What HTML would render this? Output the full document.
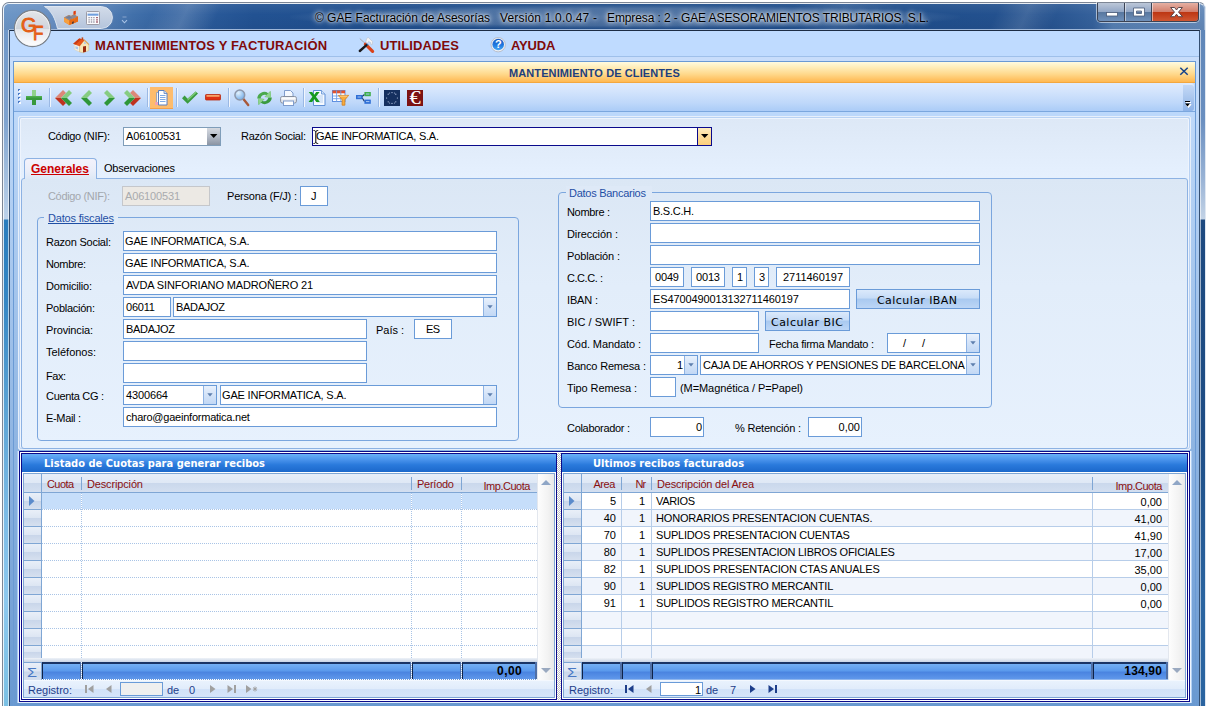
<!DOCTYPE html>
<html lang="es"><head><meta charset="utf-8"><title>GAE Facturación de Asesorías</title>
<style>
html,body{margin:0;padding:0;background:#fff;}
body{width:1206px;height:706px;overflow:hidden;position:relative;font-family:"Liberation Sans",sans-serif;}
#w{position:absolute;left:0;top:0;width:1206px;height:706px;overflow:hidden;}
#w div{position:absolute;box-sizing:border-box;}
#w svg{position:absolute;overflow:visible;}
.t{position:absolute;white-space:pre;color:#000;}
.n{font:11px "Liberation Sans",sans-serif;line-height:13px;}
.b11{font:bold 11px "Liberation Sans",sans-serif;line-height:13px;}
.b12{font:bold 12px "Liberation Sans",sans-serif;line-height:14px;}
.b13{font:bold 13px "Liberation Sans",sans-serif;line-height:15px;}
.t12{font:12px "Liberation Sans",sans-serif;line-height:14px;}
.tb{font:bold 11px "DejaVu Sans Condensed","DejaVu Sans",sans-serif;line-height:13px;}
.v{font:11px "DejaVu Sans",sans-serif;line-height:13px;}
.f{background:#fff;border:1px solid #6a9bd8;}
.btn{border:1px solid #6a9bd8;background:linear-gradient(#dbe9fb,#c6dcf7 45%,#a9c9f0 50%,#bcd6f6);}
</style></head>
<body><div id="w">
<div style="left:2px;top:2px;width:1204px;height:710px;border-radius:7px 7px 0 0;border:1px solid #7d8695;border-right-color:#dfe7f2;background:#6f9acb;"></div>
<div style="left:3px;top:3px;width:1202px;height:28px;border-radius:6px 6px 0 0;background:linear-gradient(90deg,#6d96c6 0,#6990c2 45px,#5580b6 100px,#4170aa 130px,#2f5f9e 175px,#225292 250px,#1d4b88 600px,#1f4e8c 900px,#25528f 1040px,#35619b 1090px,#567fb2 1110px,#6489b8 1200px);"></div>
<div style="left:3px;top:3px;width:1202px;height:60px;border-top:1px solid rgba(255,255,255,.9);border-left:1px solid rgba(255,255,255,.9);border-right:1px solid rgba(255,255,255,.35);border-radius:6px 6px 0 0;"></div>
<div style="left:3px;top:4px;width:1202px;height:27px;background:linear-gradient(rgba(255,255,255,.07),rgba(255,255,255,0) 40%,rgba(0,0,30,.05));"></div>
<div style="left:130px;top:4px;width:120px;height:26px;background:linear-gradient(115deg,rgba(255,255,255,0) 20%,rgba(255,255,255,.16) 45%,rgba(255,255,255,0) 70%);"></div>
<div style="left:760px;top:4px;width:160px;height:26px;background:linear-gradient(115deg,rgba(255,255,255,0) 20%,rgba(255,255,255,.10) 50%,rgba(255,255,255,0) 80%);"></div>
<div style="left:980px;top:4px;width:90px;height:26px;background:linear-gradient(115deg,rgba(255,255,255,0) 20%,rgba(255,255,255,.12) 50%,rgba(255,255,255,0) 80%);"></div>
<div style="left:3px;top:30px;width:6px;height:680px;background:linear-gradient(#6f97c8 0,#7fa3cf 90px,#a0bcdc 140px,#bdd2ea 189px,#2a7dbd 190px,#3587c4 270px,#5fa6d6 390px,#7dbce6 490px,#8cc8ee 570px,#7ac0e4 676px);"></div>
<div style="left:3px;top:30px;width:1px;height:680px;background:rgba(255,255,255,.8);"></div>
<div style="left:8px;top:30px;width:1px;height:680px;background:rgba(255,255,255,.6);"></div>
<div style="left:1200px;top:30px;width:5px;height:680px;background:linear-gradient(#5f86b8 0,#6a8fc0 90px,#9ab4d6 150px,#c3d3e6 189px,#1d4a80 190px,#1e4d85 400px,#2a64a0 570px,#2a64a0 676px);"></div>
<div style="left:1200px;top:30px;width:1px;height:680px;background:rgba(255,255,255,.58);"></div>
<div style="left:9px;top:29px;width:1191px;height:1px;background:#9fb7d8;"></div>
<div style="left:9px;top:30px;width:1191px;height:680px;border:1px solid #344f72;border-top-color:#1c2c44;border-bottom:0;background:#bfdbff;"></div>
<div style="left:290px;top:5px;width:670px;height:24px;background:radial-gradient(ellipse at center,rgba(255,255,255,.26) 0,rgba(255,255,255,.18) 50%,rgba(255,255,255,0) 72%);"></div>
<span class="t t12" style="left:315px;top:11px;letter-spacing:-0.04px;text-shadow:0 0 6px rgba(255,255,255,.95),0 0 4px rgba(255,255,255,.8),0 0 2px rgba(255,255,255,.5);">© GAE Facturación de Asesorías</span>
<span class="t t12" style="left:500px;top:11px;letter-spacing:0.17px;text-shadow:0 0 6px rgba(255,255,255,.95),0 0 4px rgba(255,255,255,.8),0 0 2px rgba(255,255,255,.5);">Versión 1.0.0.47 -</span>
<span class="t t12" style="left:607px;top:11px;letter-spacing:-0.1px;text-shadow:0 0 6px rgba(255,255,255,.95),0 0 4px rgba(255,255,255,.8),0 0 2px rgba(255,255,255,.5);">Empresa : 2 - GAE ASESORAMIENTOS TRIBUTARIOS, S.L.</span>
<div style="left:10px;top:31px;width:1189px;height:26px;background:#bfdbff;"></div>
<div style="left:10px;top:56px;width:1189px;height:1px;background:#9fc0ea;"></div>
<div style="left:10px;top:57px;width:1189px;height:4px;background:#c8ddfb;"></div>
<div style="left:10px;top:61px;width:1189px;height:650px;background:linear-gradient(#c6defc,#6898d0);"></div>
<span class="t b13" style="left:95px;top:38px;letter-spacing:0.14px;color:#7f0a0a;">MANTENIMIENTOS Y FACTURACIÓN</span>
<span class="t b13" style="left:380px;top:38px;letter-spacing:0.11px;color:#7f0a0a;">UTILIDADES</span>
<span class="t b13" style="left:511px;top:38px;letter-spacing:-0.13px;color:#7f0a0a;">AYUDA</span>
<svg style="left:72px;top:36px" width="19" height="18" viewBox="72 36 19 18">
<path d="M74.2 44.2 L79.6 46 L79.6 52 L74.4 49.6Z" fill="#f4efe2" stroke="#d9c9a8" stroke-width=".4"/>
<path d="M79.6 46 L84.4 40.2 L88.8 44.4 L88.8 50.6 L83.4 52.8 L79.6 52Z" fill="#f7e7b8" stroke="#c9a870" stroke-width=".4"/>
<path d="M73.2 43.8 L79.2 38.4 L84.8 39.8 L79.6 46.2Z" fill="#e8561a"/>
<path d="M73.2 43.8 L79.2 38.4 L81.4 39 L75.6 44.6Z" fill="#c93a12"/>
<path d="M84.6 39.6 L89.4 44.2 L88.6 45 L84.2 41Z" fill="#d9a860"/>
<rect x="81.6" y="37.4" width="1.6" height="2.6" fill="#c04818"/>
<path d="M83 46.4 L86 46 L86 51.8 L83 52.4Z" fill="#9a2c10"/>
<path d="M75.4 46.2 L78 47 L78 49.4 L75.4 48.4Z" fill="#a8c8f0"/>
<rect x="84" y="42.2" width="1.8" height="1.8" fill="#b4c8ea"/>
</svg>
<svg style="left:357px;top:36px" width="19" height="18" viewBox="357 36 19 18">
<path d="M359.8 38.6 L365.6 43.8" stroke="#a9a9ae" stroke-width="1" fill="none"/>
<path d="M365.4 44.2 L372.6 51.4" stroke="#d9421a" stroke-width="3.2" stroke-linecap="round" fill="none"/>
<path d="M366.4 43.6 L368 45.2" stroke="#3a8ad8" stroke-width="1.6" fill="none"/>
<path d="M366.4 45.2 L359.8 51" stroke="#1a1a1e" stroke-width="2.4" stroke-linecap="round" fill="none"/>
<path d="M366.6 38.6 L368.2 37.4 L372.6 41.6 L372.2 44.6 L371 44.8 L370.6 42.6 L368.6 41.4 L367.4 43.4 L365.8 42Z" fill="#f4f4f6" stroke="#b4b8c0" stroke-width=".5"/>
</svg>
<svg style="left:490px;top:36px" width="17" height="17" viewBox="490 36 17 17">
<defs><linearGradient id="hg" x1="0" y1="0" x2="0" y2="1"><stop offset="0" stop-color="#1458c0"/><stop offset=".55" stop-color="#1f78e0"/><stop offset="1" stop-color="#48aaf4"/></linearGradient></defs>
<circle cx="498.2" cy="44.7" r="7.2" fill="#eef0f4" stroke="#b4bac6" stroke-width=".9"/>
<circle cx="498.2" cy="44.5" r="5.8" fill="url(#hg)"/>
</svg>
<span class="t" style="left:495px;top:38px;font:bold 11px/13px 'Liberation Sans',sans-serif;color:#fff;">?</span>
<div style="left:13px;top:61px;width:1183px;height:660px;border:1px solid #6a9ad4;"></div>
<div style="left:14px;top:62px;width:1181px;height:21px;background:linear-gradient(#fffbe0 0,#ffeebb 25%,#ffd98c 60%,#ffb850 100%);border-bottom:1px solid #f3a73e;"></div>
<span class="t b11" style="left:509px;top:67px;letter-spacing:0.1px;color:#1e3f7d;">MANTENIMIENTO DE CLIENTES</span>
<svg style="left:1179px;top:66px" width="10" height="10" viewBox="0 0 10 10"><path d="M1.3 1.8 L8.7 8.8 M8.7 1.8 L1.3 8.8" stroke="#15428b" stroke-width="1.5" fill="none"/></svg>
<div style="left:14px;top:83px;width:1180px;height:28px;background:linear-gradient(#dfebfd 0,#d3e4fc 30%,#bfd8fa 70%,#abccf7 100%);border-radius:0 3px 3px 0;"></div>
<div style="left:14px;top:111px;width:1181px;height:1px;background:#7ba7de;"></div>
<div style="left:1183px;top:85px;width:11px;height:26px;background:linear-gradient(#c4d9f6 0,#a9c6ee 50%,#8db3e8 100%);border-radius:0 3px 3px 0;"></div>
<svg style="left:1184px;top:100px" width="8" height="8" viewBox="0 0 8 8"><path d="M2 2.5h5 M2 4.5h5l-2.5 3z" fill="#fff" stroke="#fff" stroke-width="1"/><path d="M1 1.5h5" stroke="#000" stroke-width="1"/><path d="M1 3.5h5l-2.5 3z" fill="#000"/></svg>
<div style="left:18px;top:89px;width:2px;height:2px;background:#4a7ac8;"></div>
<div style="left:19px;top:90px;width:2px;height:2px;background:#fff;opacity:.9;"></div>
<div style="left:18px;top:93px;width:2px;height:2px;background:#4a7ac8;"></div>
<div style="left:19px;top:94px;width:2px;height:2px;background:#fff;opacity:.9;"></div>
<div style="left:18px;top:97px;width:2px;height:2px;background:#4a7ac8;"></div>
<div style="left:19px;top:98px;width:2px;height:2px;background:#fff;opacity:.9;"></div>
<div style="left:18px;top:101px;width:2px;height:2px;background:#4a7ac8;"></div>
<div style="left:19px;top:102px;width:2px;height:2px;background:#fff;opacity:.9;"></div>
<div style="left:49px;top:88px;width:1px;height:19px;background:#9ab8e4;"></div>
<div style="left:50px;top:88px;width:1px;height:19px;background:#f1f6fd;"></div>
<div style="left:147px;top:88px;width:1px;height:19px;background:#9ab8e4;"></div>
<div style="left:148px;top:88px;width:1px;height:19px;background:#f1f6fd;"></div>
<div style="left:176px;top:88px;width:1px;height:19px;background:#9ab8e4;"></div>
<div style="left:177px;top:88px;width:1px;height:19px;background:#f1f6fd;"></div>
<div style="left:228px;top:88px;width:1px;height:19px;background:#9ab8e4;"></div>
<div style="left:229px;top:88px;width:1px;height:19px;background:#f1f6fd;"></div>
<div style="left:303px;top:88px;width:1px;height:19px;background:#9ab8e4;"></div>
<div style="left:304px;top:88px;width:1px;height:19px;background:#f1f6fd;"></div>
<div style="left:378px;top:88px;width:1px;height:19px;background:#9ab8e4;"></div>
<div style="left:379px;top:88px;width:1px;height:19px;background:#f1f6fd;"></div>
<svg style="left:26px;top:90px" width="16" height="15" viewBox="0 0 16 15"><path d="M6 0h4v6h6v4h-6v5h-4v-5h-6v-4h6z" fill="#37993d"/><path d="M6 0h4v6h-4z" fill="#90d28c"/><path d="M0 6h16v1.5h-16z" fill="#4fae50"/></svg>
<svg style="left:55px;top:90px" width="17" height="16" viewBox="0 0 17 16"><path d="M0 8 L8 0 L11 3 L6 8Z" fill="#dc8878"/><path d="M0 8 L8 16 L11 13 L6 8Z" fill="#bf3220"/><path d="M6 8 L14 0 L17 3 L12 8Z" fill="#86cc82"/><path d="M6 8 L14 16 L17 13 L12 8Z" fill="#2f9638"/></svg>
<svg style="left:81px;top:90px" width="12" height="16" viewBox="0 0 12 16"><path d="M0 8 L8 0 L11 3 L6 8Z" fill="#86cc82"/><path d="M0 8 L8 16 L11 13 L6 8Z" fill="#2f9638"/></svg>
<svg style="left:104px;top:90px" width="12" height="16" viewBox="0 0 12 16"><path d="M11 8 L3 0 L0 3 L5 8Z" fill="#86cc82"/><path d="M11 8 L3 16 L0 13 L5 8Z" fill="#2f9638"/></svg>
<svg style="left:124px;top:90px" width="17" height="16" viewBox="0 0 17 16"><path d="M17 8 L9 0 L6 3 L11 8Z" fill="#dc8878"/><path d="M17 8 L9 16 L6 13 L11 8Z" fill="#bf3220"/><path d="M11 8 L3 0 L0 3 L5 8Z" fill="#86cc82"/><path d="M11 8 L3 16 L0 13 L5 8Z" fill="#2f9638"/></svg>
<div style="left:150px;top:87px;width:23px;height:22px;background:#fdbc6d;border-bottom:1px solid #f3a04a;"></div>
<svg style="left:155px;top:90px" width="13" height="16" viewBox="0 0 13 16"><path d="M1.5 2.5h2v12h-2z" fill="#f2f4f8" stroke="#8a9bb5" stroke-width=".8"/><path d="M3.5 .5h5.5l3 3v11.5h-8.5z" fill="#fff" stroke="#5a7fc0"/><path d="M5 5.5h5.5M5 7.5h5.5M5 9.5h5.5M5 11.5h5.5" stroke="#7faae6" stroke-width="1"/><path d="M9 .5v3h3" fill="#cfe0f5" stroke="#5a7fc0" stroke-width=".8"/><rect x="0" y="12" width="3" height="3" fill="#f2a0b0"/></svg>
<svg style="left:182px;top:91px" width="16" height="13" viewBox="0 0 16 13"><path d="M0 7.2 L2.6 4.6 L5.6 7.8 L13.6 .4 L16 2.6 L5.6 12.8Z" fill="#3a9b3f"/><path d="M5.6 7.8 L13.6 .4 L14.8 1.5 L5.6 10Z" fill="#7cc878"/></svg>
<svg style="left:205px;top:94px" width="16" height="7" viewBox="0 0 16 7"><rect x=".5" y=".5" width="15" height="5.5" rx=".8" fill="#de3014" stroke="#b82a10" stroke-width=".8"/><rect x="1.5" y="1" width="13" height="1.8" fill="#f6a268"/></svg>
<svg style="left:233px;top:89px" width="17" height="18" viewBox="0 0 17 18"><defs><radialGradient id="mg" cx=".35" cy=".3" r=".8"><stop offset="0" stop-color="#e3f2fd"/><stop offset="1" stop-color="#6aa6e6"/></radialGradient></defs><path d="M10.4 10 L15.2 16" stroke="#a8583a" stroke-width="2.4" stroke-linecap="round"/><circle cx="6.8" cy="6" r="4.9" fill="url(#mg)" stroke="#8d97ab" stroke-width="1.5"/></svg>
<svg style="left:256px;top:90px" width="17" height="16" viewBox="0 0 17 16"><path d="M1.2 8.5 A7 7 0 0 1 12.2 3.2 L14.4 1 L15 7.6 L8.6 7 L10.4 5.1 A4.3 4.3 0 0 0 4.6 8.4Z" fill="#4aa94c"/><path d="M15.8 7.5 A7 7 0 0 1 4.8 12.8 L2.6 15 L2 8.4 L8.4 9 L6.6 10.9 A4.3 4.3 0 0 0 12.4 7.6Z" fill="#3a9a40"/><path d="M2.6 15 L2 8.4 L8.4 9Z M14.4 1 L15 7.6 L8.6 7Z" fill="#8fd48c"/></svg>
<svg style="left:280px;top:90px" width="17" height="16" viewBox="0 0 17 16"><path d="M4.5 .5h6l2.5 2.5v5h-8.5z" fill="#f4f8fe" stroke="#7f9ccc"/><rect x=".6" y="6.5" width="15.8" height="6.5" rx="1.8" fill="#e4e7ec" stroke="#878f9e"/><rect x="1.5" y="7.4" width="14" height="2" fill="#fafbfc"/><rect x="3.5" y="11" width="10" height="4.5" fill="#fff" stroke="#7f9ccc"/></svg>
<svg style="left:308px;top:90px" width="18" height="16" viewBox="0 0 18 16"><path d="M5.5 .5h8l3.5 3.5v11.5h-11.5z" fill="#f6faff" stroke="#5f90d6"/><path d="M13.5 .5v3.5h3.5" fill="#d4e4f8" stroke="#5f90d6" stroke-width=".8"/><path d="M9 6h6M9 8h6M9 10h6M9 12h6" stroke="#a8c6ee" stroke-width=".8"/><path d="M.8 2 h3.4 l2 2.8 l2-2.8 h3.4 l-3.6 4.8 l3.8 5.2 h-3.6 l-2-3 l-2 3 h-3.6 l3.8-5.2z" fill="#169a1e"/></svg>
<svg style="left:332px;top:90px" width="17" height="16" viewBox="0 0 17 16"><rect x=".5" y=".5" width="12.5" height="11" fill="#fff" stroke="#5f90e0"/><rect x=".5" y=".5" width="12.5" height="2.8" fill="#e2522c"/><path d="M.5 6h12.5M.5 8.7h12.5M4.6 .5v11M8.8 .5v11" stroke="#6f9fe6" stroke-width=".9"/><path d="M6.4 5.4h10.2l-3.7 4.4v5.4h-2.8v-5.4z" fill="#f8ab3c" stroke="#cf7f1e" stroke-width=".8"/><path d="M7.6 6.2h7.8" stroke="#fbd08a" stroke-width="1"/></svg>
<svg style="left:356px;top:92px" width="15" height="13" viewBox="0 0 15 13"><path d="M6 4.5 L8.5 2.5 M6 5.5 L8.5 9.5" stroke="#16305e" stroke-width="1.1" fill="none"/><rect x="0" y="3" width="6.4" height="4.2" fill="#2f6fd6"/><rect x="8.4" y="0" width="6.4" height="4.2" fill="#3fae4a"/><rect x="8.4" y="7.6" width="6.4" height="4.2" fill="#2f6fd6"/><path d="M1.5 5h3.4M10 2h3.4M10 9.6h3.4" stroke="#a9c8f4" stroke-width="1"/></svg>
<svg style="left:384px;top:90px" width="16" height="16" viewBox="0 0 16 16"><rect width="16" height="16" fill="#15305f"/><g fill="#b9c8e6"><circle cx="8" cy="2.6" r=".6"/><circle cx="8" cy="13.4" r=".6"/><circle cx="2.6" cy="8" r=".6"/><circle cx="13.4" cy="8" r=".6"/><circle cx="4.2" cy="4.2" r=".6"/><circle cx="11.8" cy="4.2" r=".6"/><circle cx="4.2" cy="11.8" r=".6"/><circle cx="11.8" cy="11.8" r=".6"/><circle cx="5.6" cy="3" r=".5"/><circle cx="10.4" cy="3" r=".5"/><circle cx="5.6" cy="13" r=".5"/><circle cx="10.4" cy="13" r=".5"/></g></svg>
<div style="left:407px;top:90px;width:16px;height:16px;background:#7d1212;overflow:hidden;"><span class="t" style="left:0;top:-2px;width:16px;text-align:center;font:18px/20px 'Liberation Serif',serif;color:#fff;transform:scaleX(1.25);">€</span></div>
<svg style="left:40px;top:3px" width="100" height="30" viewBox="40 3 100 30">
<defs><linearGradient id="qg" x1="0" y1="0" x2="0" y2="1"><stop offset="0" stop-color="#d2dcea"/><stop offset=".5" stop-color="#c4d0e2"/><stop offset="1" stop-color="#b4c4dc"/></linearGradient></defs>
<path d="M44.5 6.5 H101.5 A11 11 0 0 1 101.5 28.5 H57.5 C55.5 19.5 52 11 44.5 6.5 Z" fill="url(#qg)" stroke="#dde6f1" stroke-width="1"/>
<path d="M43 5.5 H101.5 A12 12 0 0 1 101.5 29.5 H70" fill="none" stroke="#5c80b0" stroke-width="1" opacity=".7"/>
</svg>
<svg style="left:63px;top:10px" width="16" height="16" viewBox="63 10 16 16">
<path d="M64 17.4 L69 15 L71 16 L73.6 14.6 L73.6 11.4 L75.6 10.8 L75.6 15.4 L78 16.6 L78 21.4 L69.4 25 L64 21.8Z" fill="#ef7d1e"/>
<path d="M64 17.4 L69 15 L71 16 L73.6 14.6 L78 16.6 L69.4 20.4Z" fill="#8e8a94"/>
<path d="M66 17.4 L69 16 L72 17.4 L69.2 18.8Z" fill="#6f7f9a"/>
<path d="M73.6 11.4 L75.6 10.8 L75.6 14 L73.6 14.6Z" fill="#d9381a"/>
<path d="M64 17.4 L69.4 20.4 L69.4 25 L64 21.8Z" fill="#f6a040"/>
<path d="M69.4 20.4 L71.6 18.2 L71.6 20.6 L73.8 18 L73.8 20 L76 17.6 L78 16.6 L78 21.4 L69.4 25Z" fill="#e86a14"/>
<path d="M72 22 l1.8 -.8 v2 l-1.8 .8z" fill="#5a3a30"/>
</svg>
<svg style="left:86px;top:11px" width="14" height="14" viewBox="0 0 14 14">
<rect x=".5" y=".5" width="13" height="13" rx=".8" fill="#fbfbfd" stroke="#9c9ca6"/>
<rect x="1.5" y="1.5" width="11" height="1.2" fill="#dfe6f2"/>
<rect x="1.5" y="2.7" width="11" height="2" fill="#6f9fde"/>
<path d="M2.4 6.6h1.4M4.8 6.6h1.4M7.2 6.6h1.4M2.4 8.8h1.4M4.8 8.8h1.4M7.2 8.8h1.4M2.4 11h1.4M4.8 11h1.4M7.2 11h1.4" stroke="#9a9aa8" stroke-width="1.3"/>
<path d="M10 6.6h2M10 8.8h2M10 11h2" stroke="#a86a78" stroke-width="1.3"/>
</svg>
<svg style="left:121px;top:16px" width="7" height="8" viewBox="0 0 7 8"><path d="M1.5 1h4" stroke="#88a4cc" stroke-width="1"/><path d="M1 4.2 L3.5 6.8 L6 4.2" fill="none" stroke="#a9c3e6" stroke-width="1.1"/></svg>
<svg style="left:13px;top:9px" width="40" height="40" viewBox="0 0 40 40">
<defs>
<radialGradient id="og" cx=".5" cy=".25" r=".9"><stop offset="0" stop-color="#f6f7f9"/><stop offset=".45" stop-color="#d9dde3"/><stop offset=".55" stop-color="#c9ced6"/><stop offset="1" stop-color="#ffffff"/></radialGradient>
<linearGradient id="og2" x1="0" y1="0" x2="0" y2="1"><stop offset="0" stop-color="#e3e6ea"/><stop offset=".5" stop-color="#cfd4db"/><stop offset=".52" stop-color="#e2e5ea"/><stop offset="1" stop-color="#ffffff"/></linearGradient>
</defs>
<circle cx="19.5" cy="19.5" r="18" fill="url(#og2)" stroke="#7c838c" stroke-width="1.3"/>
<circle cx="19.5" cy="19.5" r="17" fill="none" stroke="#f4f5f7" stroke-width="1" opacity=".9"/>
</svg>
<span class="t" style="left:21px;top:13px;font:20px/24px 'Liberation Sans',sans-serif;color:#e8641a;-webkit-text-stroke:.9px #e35c14;">G</span>
<span class="t" style="left:33px;top:21px;font:20px/24px 'Liberation Sans',sans-serif;color:#e8641a;-webkit-text-stroke:.9px #e35c14;transform:scaleX(.85);transform-origin:0 0;">F</span>
<div style="left:1096px;top:2px;width:104px;height:21px;border:1px solid rgba(255,255,255,.55);border-top:0;border-radius:0 0 5px 5px;"></div>
<div style="left:1097px;top:3px;width:102px;height:19px;border:1px solid #3b4355;border-top:0;border-radius:0 0 4px 4px;overflow:hidden;background:#6f8db8;"><div style="left:0;top:0;width:27px;height:18px;background:linear-gradient(#bcc7d8 0,#93a7c6 48%,#58779f 52%,#6f90ba 100%);border-right:1px solid #3b4355;"></div><div style="left:27px;top:0;width:27px;height:18px;background:linear-gradient(#bcc7d8 0,#93a7c6 48%,#58779f 52%,#6f90ba 100%);border-left:1px solid rgba(255,255,255,.5);border-right:1px solid #3b4355;"></div><div style="left:54px;top:0;width:47px;height:18px;background:linear-gradient(#e5b0a3 0,#d27f6d 48%,#bd3613 52%,#cf5632 100%);border-left:1px solid rgba(255,255,255,.5);"></div></div>
<svg style="left:1097px;top:3px" width="102" height="19" viewBox="0 0 102 19">
<rect x="9.5" y="9.5" width="11" height="3.5" fill="#fff" stroke="#4a5a78" stroke-width=".8"/>
<path d="M36.5 5 h11 v8 h-11z M39.5 8 v2.5 h5 v-2.5z" fill="#fff" stroke="#4a5a78" stroke-width=".8" fill-rule="evenodd"/>
<path d="M73.6 4.5 h4 l1.9 2.5 l1.9 -2.5 h4 l-3.9 4.6 l4 4.6 h-4 l-2 -2.5 l-2 2.5 h-4 l4 -4.6z" fill="#fff" stroke="#4d3a40" stroke-width=".9"/>
</svg>
<div style="left:14px;top:112px;width:1181px;height:4px;background:#bcd8fb;"></div>
<div style="left:18px;top:116px;width:1173px;height:334px;background:linear-gradient(#dde8f6 0,#e5f0fe 18%,#e6f0fd 100%);border:1px solid #e6effb;border-radius:2px;"></div>
<div style="left:19px;top:117px;width:1171px;height:332px;border:1px solid #b9d2f3;border-radius:2px;"></div>
<div style="left:20px;top:118px;width:1169px;height:330px;border:1px solid #eef4fd;border-radius:2px;"></div>
<span class="t n" style="left:48px;top:130px;letter-spacing:-0.34px;">Código (NIF):</span>
<div style="left:123px;top:127px;width:98px;height:19px;background:#fff;border:1px solid #7f9db9;"></div>
<div style="left:207px;top:128px;width:13px;height:17px;background:linear-gradient(#d5d9e0,#b3bac6 50%,#8b94a3);"></div>
<svg style="left:210px;top:134px" width="8" height="4" viewBox="0 0 8 4"><path d="M0 0h7.4L3.7 4z" fill="#000"/></svg>
<span class="t n" style="left:126px;top:130px;letter-spacing:-0.16px;">A06100531</span>
<span class="t n" style="left:241px;top:130px;letter-spacing:-0.24px;">Razón Social:</span>
<div style="left:312px;top:127px;width:400px;height:19px;background:#fff;border:1px solid #0a0a8c;"></div>
<div style="left:697px;top:128px;width:14px;height:17px;background:linear-gradient(#ffedc0,#fddc98 50%,#fbcf7c);border-left:1px solid #0a0a8c;"></div>
<svg style="left:701px;top:134px" width="8" height="4" viewBox="0 0 8 4"><path d="M0 0h7.4L3.7 4z" fill="#000"/></svg>
<span class="t n" style="left:316px;top:130px;letter-spacing:-0.26px;">GAE INFORMATICA, S.A.</span>
<svg style="left:313px;top:130px" width="6" height="14" viewBox="0 0 6 14"><path d="M.5 .5 C2 .5 2.8 1 2.8 2 V12 C2.8 13 2 13.5 .5 13.5 M5.2 .5 C3.8 .5 2.8 1 2.8 2 M5.2 13.5 C3.8 13.5 2.8 13 2.8 12" fill="none" stroke="#000" stroke-width="1"/></svg>
<div style="left:21px;top:178px;width:1167px;height:271px;background:linear-gradient(#dbe7f5 0,#e2edfa 40%,#e7f1fd 100%);border:1px solid #8db2e3;border-radius:3px;"></div>
<div style="left:24px;top:158px;width:73px;height:21px;background:linear-gradient(#f3f2fb,#eaeef9 60%,#dde8f6);border:1px solid #8db2e3;border-bottom:0;border-radius:4px 4px 0 0;"></div>
<span class="t b12" style="left:31px;top:162px;letter-spacing:-0.01px;color:#cc0000;text-decoration:underline;">Generales</span>
<span class="t n" style="left:104px;top:162px;letter-spacing:-0.2px;">Observaciones</span>
<span class="t n" style="left:48px;top:190px;letter-spacing:-0.34px;color:#a3a7ad;">Código (NIF):</span>
<div style="left:122px;top:186px;width:88px;height:20px;background:#ece9e4;border:1px solid #c5c7cb;"></div>
<span class="t n" style="left:125px;top:190px;letter-spacing:-0.16px;color:#a9abae;">A06100531</span>
<span class="t n" style="left:227px;top:190px;letter-spacing:-0.2px;">Persona (F/J) :</span>
<div style="left:300px;top:186px;width:28px;height:20px;background:#fff;border:1px solid #6a9bd8;"></div>
<span class="t n" style="left:311px;top:190px;">J</span>
<div style="left:37px;top:217px;width:482px;height:224px;border:1px solid #7ba6de;border-radius:4px;"></div>
<div style="left:44px;top:212px;width:74px;height:12px;background:#e0ebf8;"></div>
<span class="t n" style="left:48px;top:212px;letter-spacing:-0.19px;color:#1f4fa5;text-decoration:underline;">Datos fiscales</span>
<span class="t n" style="left:46px;top:236px;letter-spacing:-0.24px;">Razon Social:</span>
<span class="t n" style="left:46px;top:258px;letter-spacing:-0.36px;">Nombre:</span>
<span class="t n" style="left:46px;top:280px;letter-spacing:-0.19px;">Domicilio:</span>
<span class="t n" style="left:46px;top:302px;letter-spacing:-0.26px;">Población:</span>
<span class="t n" style="left:46px;top:324px;letter-spacing:-0.14px;">Provincia:</span>
<span class="t n" style="left:46px;top:346px;letter-spacing:-0.02px;">Teléfonos:</span>
<span class="t n" style="left:46px;top:370px;letter-spacing:-0.47px;">Fax:</span>
<span class="t n" style="left:46px;top:390px;letter-spacing:-0.31px;">Cuenta CG :</span>
<span class="t n" style="left:46px;top:412px;letter-spacing:-0.33px;">E-Mail :</span>
<div style="left:123px;top:231px;width:374px;height:20px;background:#fff;border:1px solid #6a9bd8;"></div>
<span class="t n" style="left:125px;top:235px;letter-spacing:-0.18px;">GAE INFORMATICA, S.A.</span>
<div style="left:123px;top:253px;width:374px;height:20px;background:#fff;border:1px solid #6a9bd8;"></div>
<span class="t n" style="left:125px;top:257px;letter-spacing:-0.18px;">GAE INFORMATICA, S.A.</span>
<div style="left:123px;top:275px;width:374px;height:20px;background:#fff;border:1px solid #6a9bd8;"></div>
<span class="t n" style="left:126px;top:279px;letter-spacing:-0.15px;">AVDA SINFORIANO MADROÑERO 21</span>
<div style="left:123px;top:297px;width:48px;height:20px;background:#fff;border:1px solid #6a9bd8;"></div>
<span class="t n" style="left:126px;top:301px;letter-spacing:-0.2px;">06011</span>
<div style="left:173px;top:297px;width:324px;height:20px;background:#fff;border:1px solid #6a9bd8;"></div>
<span class="t n" style="left:176px;top:301px;letter-spacing:-0.29px;">BADAJOZ</span>
<div style="left:483px;top:298px;width:13px;height:18px;background:linear-gradient(#e9f1fc,#d3e3f8 50%,#c2d8f5);border-left:1px solid #8fb3e3;"></div>
<svg style="left:487px;top:305px" width="6" height="4" viewBox="0 0 6 4"><path d="M.3 .3h5.4L3 3.4z" fill="#5e7fae"/></svg>
<div style="left:123px;top:319px;width:244px;height:20px;background:#fff;border:1px solid #6a9bd8;"></div>
<span class="t n" style="left:126px;top:323px;letter-spacing:-0.29px;">BADAJOZ</span>
<span class="t n" style="left:376px;top:324px;letter-spacing:-0.02px;">País :</span>
<div style="left:414px;top:319px;width:38px;height:20px;background:#fff;border:1px solid #6a9bd8;"></div>
<span class="t n" style="left:426px;top:323px;letter-spacing:-0.69px;">ES</span>
<div style="left:123px;top:341px;width:244px;height:20px;background:#fff;border:1px solid #6a9bd8;"></div>
<div style="left:123px;top:363px;width:244px;height:20px;background:#fff;border:1px solid #6a9bd8;"></div>
<div style="left:123px;top:385px;width:94px;height:20px;background:#fff;border:1px solid #6a9bd8;"></div>
<span class="t n" style="left:126px;top:389px;letter-spacing:-0.14px;">4300664</span>
<div style="left:203px;top:386px;width:13px;height:18px;background:linear-gradient(#e9f1fc,#d3e3f8 50%,#c2d8f5);border-left:1px solid #8fb3e3;"></div>
<svg style="left:207px;top:393px" width="6" height="4" viewBox="0 0 6 4"><path d="M.3 .3h5.4L3 3.4z" fill="#5e7fae"/></svg>
<div style="left:220px;top:385px;width:277px;height:20px;background:#fff;border:1px solid #6a9bd8;"></div>
<span class="t n" style="left:222px;top:389px;letter-spacing:-0.18px;">GAE INFORMATICA, S.A.</span>
<div style="left:483px;top:386px;width:13px;height:18px;background:linear-gradient(#e9f1fc,#d3e3f8 50%,#c2d8f5);border-left:1px solid #8fb3e3;"></div>
<svg style="left:487px;top:393px" width="6" height="4" viewBox="0 0 6 4"><path d="M.3 .3h5.4L3 3.4z" fill="#5e7fae"/></svg>
<div style="left:123px;top:407px;width:374px;height:20px;background:#fff;border:1px solid #6a9bd8;"></div>
<span class="t n" style="left:126px;top:411px;letter-spacing:-0.23px;">charo@gaeinformatica.net</span>
<div style="left:558px;top:192px;width:434px;height:216px;border:1px solid #7ba6de;border-radius:4px;"></div>
<div style="left:566px;top:186px;width:86px;height:12px;background:#dee9f7;"></div>
<span class="t n" style="left:569px;top:187px;letter-spacing:-0.27px;color:#1f4fa5;">Datos Bancarios</span>
<span class="t n" style="left:567px;top:206px;letter-spacing:-0.32px;">Nombre :</span>
<span class="t n" style="left:567px;top:228px;letter-spacing:-0.1px;">Dirección :</span>
<span class="t n" style="left:567px;top:250px;letter-spacing:-0.14px;">Población :</span>
<span class="t n" style="left:567px;top:272px;letter-spacing:-0.45px;">C.C.C. :</span>
<span class="t n" style="left:567px;top:294px;letter-spacing:-0.16px;">IBAN :</span>
<span class="t n" style="left:567px;top:316px;letter-spacing:0.03px;">BIC / SWIFT :</span>
<span class="t n" style="left:567px;top:338px;letter-spacing:-0.09px;">Cód. Mandato :</span>
<span class="t n" style="left:567px;top:360px;letter-spacing:-0.18px;">Banco Remesa :</span>
<span class="t n" style="left:567px;top:382px;letter-spacing:-0.09px;">Tipo Remesa :</span>
<div style="left:650px;top:201px;width:330px;height:20px;background:#fff;border:1px solid #6a9bd8;"></div>
<span class="t n" style="left:653px;top:205px;letter-spacing:-0.26px;">B.S.C.H.</span>
<div style="left:650px;top:223px;width:330px;height:20px;background:#fff;border:1px solid #6a9bd8;"></div>
<div style="left:650px;top:245px;width:330px;height:20px;background:#fff;border:1px solid #6a9bd8;"></div>
<div style="left:650px;top:267px;width:34px;height:20px;background:#fff;border:1px solid #6a9bd8;"></div>
<span class="t n" style="left:655px;top:271px;letter-spacing:-0.16px;">0049</span>
<div style="left:691px;top:267px;width:34px;height:20px;background:#fff;border:1px solid #6a9bd8;"></div>
<span class="t n" style="left:696px;top:271px;letter-spacing:-0.16px;">0013</span>
<div style="left:732px;top:267px;width:15px;height:20px;background:#fff;border:1px solid #6a9bd8;"></div>
<span class="t n" style="left:737px;top:271px;">1</span>
<div style="left:754px;top:267px;width:15px;height:20px;background:#fff;border:1px solid #6a9bd8;"></div>
<span class="t n" style="left:759px;top:271px;">3</span>
<div style="left:776px;top:267px;width:74px;height:20px;background:#fff;border:1px solid #6a9bd8;"></div>
<span class="t n" style="left:783px;top:271px;letter-spacing:-0.04px;">2711460197</span>
<div style="left:650px;top:289px;width:200px;height:20px;background:#fff;border:1px solid #6a9bd8;"></div>
<span class="t n" style="left:653px;top:293px;letter-spacing:-0.11px;">ES4700490013132711460197</span>
<div class="btn" style="left:856px;top:289px;width:124px;height:20px;"></div>
<span class="t v" style="left:877px;top:294px;letter-spacing:0.43px;">Calcular IBAN</span>
<div style="left:650px;top:311px;width:109px;height:20px;background:#fff;border:1px solid #6a9bd8;"></div>
<div class="btn" style="left:765px;top:311px;width:85px;height:20px;"></div>
<span class="t v" style="left:771px;top:316px;letter-spacing:0.47px;">Calcular BIC</span>
<div style="left:650px;top:333px;width:109px;height:20px;background:#fff;border:1px solid #6a9bd8;"></div>
<span class="t n" style="left:769px;top:338px;letter-spacing:-0.25px;">Fecha firma Mandato :</span>
<div style="left:887px;top:333px;width:93px;height:20px;background:#fff;border:1px solid #6a9bd8;"></div>
<span class="t n" style="left:903px;top:337px;letter-spacing:1.68px;">/   /</span>
<div style="left:966px;top:334px;width:13px;height:18px;background:linear-gradient(#e9f1fc,#d3e3f8 50%,#c2d8f5);border-left:1px solid #8fb3e3;"></div>
<svg style="left:970px;top:341px" width="6" height="4" viewBox="0 0 6 4"><path d="M.3 .3h5.4L3 3.4z" fill="#5e7fae"/></svg>
<div style="left:650px;top:355px;width:48px;height:20px;background:#fff;border:1px solid #6a9bd8;"></div>
<span class="t n" style="left:677px;top:359px;">1</span>
<div style="left:684px;top:356px;width:13px;height:18px;background:linear-gradient(#e9f1fc,#d3e3f8 50%,#c2d8f5);border-left:1px solid #8fb3e3;"></div>
<svg style="left:688px;top:363px" width="6" height="4" viewBox="0 0 6 4"><path d="M.3 .3h5.4L3 3.4z" fill="#5e7fae"/></svg>
<div style="left:700px;top:355px;width:280px;height:20px;background:#fff;border:1px solid #6a9bd8;"></div>
<span class="t n" style="left:703px;top:359px;letter-spacing:-0.22px;">CAJA DE AHORROS Y PENSIONES DE BARCELONA</span>
<div style="left:966px;top:356px;width:13px;height:18px;background:linear-gradient(#e9f1fc,#d3e3f8 50%,#c2d8f5);border-left:1px solid #8fb3e3;"></div>
<svg style="left:970px;top:363px" width="6" height="4" viewBox="0 0 6 4"><path d="M.3 .3h5.4L3 3.4z" fill="#5e7fae"/></svg>
<div style="left:650px;top:377px;width:26px;height:20px;background:#fff;border:1px solid #6a9bd8;"></div>
<span class="t n" style="left:680px;top:382px;letter-spacing:-0.08px;">(M=Magnética / P=Papel)</span>
<span class="t n" style="left:567px;top:422px;letter-spacing:-0.3px;">Colaborador :</span>
<div style="left:650px;top:417px;width:54px;height:20px;background:#fff;border:1px solid #6a9bd8;"></div>
<span class="t n" style="right:504px;top:421px;">0</span>
<span class="t n" style="left:735px;top:422px;letter-spacing:-0.21px;">% Retención :</span>
<div style="left:808px;top:417px;width:54px;height:20px;background:#fff;border:1px solid #6a9bd8;"></div>
<span class="t n" style="right:346px;top:421px;">0,00</span>
<div style="left:19px;top:451px;width:1171px;height:251px;border:1px solid #0a0a8a;background:#fff;"></div>
<div style="left:17px;top:451px;width:1px;height:252px;background:#a9c9f1;"></div>
<div style="left:18px;top:451px;width:1px;height:252px;background:#e6f0fc;"></div>
<div style="left:1190px;top:451px;width:1px;height:252px;background:#eef5fe;"></div>
<div style="left:1191px;top:451px;width:1px;height:252px;background:#b2d0f4;"></div>
<div style="left:18px;top:702px;width:1173px;height:1px;background:#e3eefb;"></div>
<div style="left:557px;top:453px;width:4px;height:247px;background:repeating-conic-gradient(#c4c4c4 0 25%,#fff 0 50%) 0 0/2px 2px;"></div>
<div style="left:21px;top:453px;width:536px;height:247px;border:1px solid #0a0a8a;background:#fff;"></div>
<div style="left:22px;top:454px;width:534px;height:18px;background:linear-gradient(#6ab0f7 0,#4690ea 35%,#2a7adc 60%,#1b68cb 100%);"></div>
<span class="t tb" style="left:44px;top:457px;letter-spacing:0.02px;color:#fff;">Listado de Cuotas para generar recibos</span>
<div style="left:23px;top:473px;width:532px;height:225px;border:1px solid #7fa6d4;background:#fff;"></div>
<div style="left:24px;top:474px;width:513px;height:19px;background:linear-gradient(#e6eef9 0,#dfe8f5 48%,#cad8ec 52%,#d3dff0 100%);border-bottom:1px solid #7fa6d4;"></div>
<div style="left:41px;top:474px;width:1px;height:184px;background:#7fa6d4;"></div>
<div style="left:42px;top:493px;width:495px;height:17px;background:#c6defa;"></div>
<div style="left:24px;top:493px;width:17px;height:17px;background:linear-gradient(#e9eff8 0,#dde6f3 48%,#c9d6ea 52%,#d6e0ef 100%);border-bottom:1px solid #7fa6d4;"></div>
<div style="left:42px;top:509px;width:495px;height:1px;background:repeating-linear-gradient(90deg,#a9c4e6 0 1px,#fff 1px 2px);"></div>
<div style="left:42px;top:510px;width:495px;height:17px;background:#fff;"></div>
<div style="left:24px;top:510px;width:17px;height:17px;background:linear-gradient(#e9eff8 0,#dde6f3 48%,#c9d6ea 52%,#d6e0ef 100%);border-bottom:1px solid #7fa6d4;"></div>
<div style="left:42px;top:526px;width:495px;height:1px;background:repeating-linear-gradient(90deg,#a9c4e6 0 1px,#fff 1px 2px);"></div>
<div style="left:42px;top:527px;width:495px;height:17px;background:#fff;"></div>
<div style="left:24px;top:527px;width:17px;height:17px;background:linear-gradient(#e9eff8 0,#dde6f3 48%,#c9d6ea 52%,#d6e0ef 100%);border-bottom:1px solid #7fa6d4;"></div>
<div style="left:42px;top:543px;width:495px;height:1px;background:repeating-linear-gradient(90deg,#a9c4e6 0 1px,#fff 1px 2px);"></div>
<div style="left:42px;top:544px;width:495px;height:17px;background:#fff;"></div>
<div style="left:24px;top:544px;width:17px;height:17px;background:linear-gradient(#e9eff8 0,#dde6f3 48%,#c9d6ea 52%,#d6e0ef 100%);border-bottom:1px solid #7fa6d4;"></div>
<div style="left:42px;top:560px;width:495px;height:1px;background:repeating-linear-gradient(90deg,#a9c4e6 0 1px,#fff 1px 2px);"></div>
<div style="left:42px;top:561px;width:495px;height:17px;background:#fff;"></div>
<div style="left:24px;top:561px;width:17px;height:17px;background:linear-gradient(#e9eff8 0,#dde6f3 48%,#c9d6ea 52%,#d6e0ef 100%);border-bottom:1px solid #7fa6d4;"></div>
<div style="left:42px;top:577px;width:495px;height:1px;background:repeating-linear-gradient(90deg,#a9c4e6 0 1px,#fff 1px 2px);"></div>
<div style="left:42px;top:578px;width:495px;height:17px;background:#fff;"></div>
<div style="left:24px;top:578px;width:17px;height:17px;background:linear-gradient(#e9eff8 0,#dde6f3 48%,#c9d6ea 52%,#d6e0ef 100%);border-bottom:1px solid #7fa6d4;"></div>
<div style="left:42px;top:594px;width:495px;height:1px;background:repeating-linear-gradient(90deg,#a9c4e6 0 1px,#fff 1px 2px);"></div>
<div style="left:42px;top:595px;width:495px;height:17px;background:#fff;"></div>
<div style="left:24px;top:595px;width:17px;height:17px;background:linear-gradient(#e9eff8 0,#dde6f3 48%,#c9d6ea 52%,#d6e0ef 100%);border-bottom:1px solid #7fa6d4;"></div>
<div style="left:42px;top:611px;width:495px;height:1px;background:repeating-linear-gradient(90deg,#a9c4e6 0 1px,#fff 1px 2px);"></div>
<div style="left:42px;top:612px;width:495px;height:17px;background:#fff;"></div>
<div style="left:24px;top:612px;width:17px;height:17px;background:linear-gradient(#e9eff8 0,#dde6f3 48%,#c9d6ea 52%,#d6e0ef 100%);border-bottom:1px solid #7fa6d4;"></div>
<div style="left:42px;top:628px;width:495px;height:1px;background:repeating-linear-gradient(90deg,#a9c4e6 0 1px,#fff 1px 2px);"></div>
<div style="left:42px;top:629px;width:495px;height:17px;background:#fff;"></div>
<div style="left:24px;top:629px;width:17px;height:17px;background:linear-gradient(#e9eff8 0,#dde6f3 48%,#c9d6ea 52%,#d6e0ef 100%);border-bottom:1px solid #7fa6d4;"></div>
<div style="left:42px;top:645px;width:495px;height:1px;background:repeating-linear-gradient(90deg,#a9c4e6 0 1px,#fff 1px 2px);"></div>
<div style="left:42px;top:646px;width:495px;height:12px;background:#fff;"></div>
<div style="left:24px;top:646px;width:17px;height:12px;background:linear-gradient(#e9eff8 0,#dde6f3 48%,#c9d6ea 52%,#d6e0ef 100%);"></div>
<div style="left:81px;top:477px;width:1px;height:13px;background:#7fa6d4;"></div>
<div style="left:81px;top:493px;width:1px;height:165px;background:repeating-linear-gradient(#a9c4e6 0 1px,#fff 1px 2px);"></div>
<div style="left:411px;top:477px;width:1px;height:13px;background:#7fa6d4;"></div>
<div style="left:411px;top:493px;width:1px;height:165px;background:repeating-linear-gradient(#a9c4e6 0 1px,#fff 1px 2px);"></div>
<div style="left:461px;top:477px;width:1px;height:13px;background:#7fa6d4;"></div>
<div style="left:461px;top:493px;width:1px;height:165px;background:repeating-linear-gradient(#a9c4e6 0 1px,#fff 1px 2px);"></div>
<span class="t n" style="left:47px;top:478px;letter-spacing:-0.59px;color:#8a1010;">Cuota</span>
<span class="t n" style="left:87px;top:478px;letter-spacing:-0.15px;color:#8a1010;">Descripción</span>
<span class="t n" style="left:417px;top:478px;letter-spacing:-0.26px;color:#8a1010;">Período</span>
<span class="t n" style="right:676px;top:480px;letter-spacing:-0.47px;color:#8a1010;">Imp.Cuota</span>
<svg style="left:29px;top:496px" width="6" height="10" viewBox="0 0 6 10"><path d="M0 0L5.5 5L0 10z" fill="#5b8bcb"/></svg>
<div style="left:537px;top:474px;width:17px;height:206px;background:linear-gradient(90deg,#fdfdfd,#f3f3f3 60%,#e9e9e9);border-left:1px solid #e3e7ee;"></div>
<svg style="left:541px;top:480px" width="10" height="5" viewBox="0 0 10 5"><path d="M0 5L5 0L10 5z" fill="#8fa6c6"/></svg>
<svg style="left:541px;top:668px" width="10" height="5" viewBox="0 0 10 5"><path d="M0 0L5 5L10 0z" fill="#9aa9c0"/></svg>
<div style="left:24px;top:658px;width:513px;height:4px;background:linear-gradient(#eef2f8,#c8d4e6);"></div>
<div style="left:24px;top:662px;width:513px;height:18px;background:#4f6fa6;"></div>
<div style="left:24px;top:662px;width:18px;height:18px;background:linear-gradient(#e9eff8 0,#dde6f3 48%,#c9d6ea 52%,#d6e0ef 100%);border-right:1px solid #7fa6d4;border-top:1px solid #7fa6d4;"></div>
<span class="t n" style="left:27px;top:666px;color:#4a78c4;font-size:13px;transform:scaleX(1.25);transform-origin:0 0;">Σ</span>
<div style="left:42px;top:662px;width:38px;height:17px;background:linear-gradient(#74b0f4 0,#5b9aec 45%,#4a84e0 55%,#5f97ea 100%);border-left:1px solid #0e2248;border-top:2px solid #1a3566;"></div>
<div style="left:82px;top:662px;width:328px;height:17px;background:linear-gradient(#74b0f4 0,#5b9aec 45%,#4a84e0 55%,#5f97ea 100%);border-left:1px solid #0e2248;border-top:2px solid #1a3566;"></div>
<div style="left:412px;top:662px;width:48px;height:17px;background:linear-gradient(#74b0f4 0,#5b9aec 45%,#4a84e0 55%,#5f97ea 100%);border-left:1px solid #0e2248;border-top:2px solid #1a3566;"></div>
<div style="left:462px;top:662px;width:73px;height:17px;background:linear-gradient(#74b0f4 0,#5b9aec 45%,#4a84e0 55%,#5f97ea 100%);border-left:1px solid #0e2248;border-top:2px solid #1a3566;"></div>
<div style="left:42px;top:679px;width:495px;height:1px;background:repeating-linear-gradient(90deg,#fff 0 1px,#6a9be0 1px 2px);"></div>
<div style="left:81px;top:662px;width:1px;height:18px;background:repeating-linear-gradient(#fff 0 1px,#9ec0ee 1px 2px);"></div>
<div style="left:411px;top:662px;width:1px;height:18px;background:repeating-linear-gradient(#fff 0 1px,#9ec0ee 1px 2px);"></div>
<div style="left:461px;top:662px;width:1px;height:18px;background:repeating-linear-gradient(#fff 0 1px,#9ec0ee 1px 2px);"></div>
<span class="t b12" style="right:684px;top:664px;letter-spacing:0.38px;color:#000;">0,00</span>
<div style="left:24px;top:680px;width:530px;height:17px;background:linear-gradient(#e9f2fd 0,#e1ecfb 48%,#d2e2f8 52%,#d6e5fa 100%);border-top:1px solid #f4f8fe;"></div>
<span class="t n" style="left:28px;top:684px;letter-spacing:0.0px;color:#1e3e8a;">Registro:</span>
<svg style="left:85px;top:685px" width="9" height="8" viewBox="0 0 9 8"><path d="M0 0h2v8h-2zM8.5 0v8L3 4z" fill="#a0a0a0"/></svg>
<svg style="left:106px;top:685px" width="6" height="8" viewBox="0 0 6 8"><path d="M5.5 0v8L0 4z" fill="#a0a0a0"/></svg>
<div style="left:120px;top:682px;width:43px;height:14px;background:#efefef;border:1px solid #6a9bd8;"></div>
<span class="t n" style="left:167px;top:684px;color:#1e3e8a;">de</span>
<span class="t n" style="left:189px;top:684px;color:#1e3e8a;">0</span>
<svg style="left:210px;top:685px" width="6" height="8" viewBox="0 0 6 8"><path d="M0 0v8L5.5 4z" fill="#a0a0a0"/></svg>
<svg style="left:227px;top:685px" width="9" height="8" viewBox="0 0 9 8"><path d="M7 0h2v8h-2zM.5 0v8L6 4z" fill="#a0a0a0"/></svg>
<svg style="left:246px;top:685px" width="12" height="8" viewBox="0 0 12 8"><path d="M0 0v8L5.5 4z" fill="#a0a0a0"/><path d="M9 1.5v5M6.8 4h4.4M7.4 2.4l3.2 3.2M10.6 2.4L7.4 5.6" stroke="#a0a0a0" stroke-width="1"/></svg>
<div style="left:561px;top:453px;width:627px;height:247px;border:1px solid #0a0a8a;background:#fff;"></div>
<div style="left:562px;top:454px;width:625px;height:18px;background:linear-gradient(#6ab0f7 0,#4690ea 35%,#2a7adc 60%,#1b68cb 100%);"></div>
<span class="t tb" style="left:593px;top:457px;letter-spacing:0.04px;color:#fff;">Ultimos recibos facturados</span>
<div style="left:563px;top:473px;width:623px;height:225px;border:1px solid #7fa6d4;background:#fff;"></div>
<div style="left:564px;top:474px;width:604px;height:19px;background:linear-gradient(#e6eef9 0,#dfe8f5 48%,#cad8ec 52%,#d3dff0 100%);border-bottom:1px solid #7fa6d4;"></div>
<div style="left:581px;top:474px;width:1px;height:184px;background:#7fa6d4;"></div>
<div style="left:582px;top:493px;width:586px;height:17px;background:#fff;"></div>
<div style="left:564px;top:493px;width:17px;height:17px;background:linear-gradient(#e9eff8 0,#dde6f3 48%,#c9d6ea 52%,#d6e0ef 100%);border-bottom:1px solid #7fa6d4;"></div>
<div style="left:582px;top:509px;width:586px;height:1px;background:#b7cde9;"></div>
<div style="left:582px;top:510px;width:586px;height:17px;background:#f1f5fc;"></div>
<div style="left:564px;top:510px;width:17px;height:17px;background:linear-gradient(#e9eff8 0,#dde6f3 48%,#c9d6ea 52%,#d6e0ef 100%);border-bottom:1px solid #7fa6d4;"></div>
<div style="left:582px;top:526px;width:586px;height:1px;background:#b7cde9;"></div>
<div style="left:582px;top:527px;width:586px;height:17px;background:#fff;"></div>
<div style="left:564px;top:527px;width:17px;height:17px;background:linear-gradient(#e9eff8 0,#dde6f3 48%,#c9d6ea 52%,#d6e0ef 100%);border-bottom:1px solid #7fa6d4;"></div>
<div style="left:582px;top:543px;width:586px;height:1px;background:#b7cde9;"></div>
<div style="left:582px;top:544px;width:586px;height:17px;background:#f1f5fc;"></div>
<div style="left:564px;top:544px;width:17px;height:17px;background:linear-gradient(#e9eff8 0,#dde6f3 48%,#c9d6ea 52%,#d6e0ef 100%);border-bottom:1px solid #7fa6d4;"></div>
<div style="left:582px;top:560px;width:586px;height:1px;background:#b7cde9;"></div>
<div style="left:582px;top:561px;width:586px;height:17px;background:#fff;"></div>
<div style="left:564px;top:561px;width:17px;height:17px;background:linear-gradient(#e9eff8 0,#dde6f3 48%,#c9d6ea 52%,#d6e0ef 100%);border-bottom:1px solid #7fa6d4;"></div>
<div style="left:582px;top:577px;width:586px;height:1px;background:#b7cde9;"></div>
<div style="left:582px;top:578px;width:586px;height:17px;background:#f1f5fc;"></div>
<div style="left:564px;top:578px;width:17px;height:17px;background:linear-gradient(#e9eff8 0,#dde6f3 48%,#c9d6ea 52%,#d6e0ef 100%);border-bottom:1px solid #7fa6d4;"></div>
<div style="left:582px;top:594px;width:586px;height:1px;background:#b7cde9;"></div>
<div style="left:582px;top:595px;width:586px;height:17px;background:#fff;"></div>
<div style="left:564px;top:595px;width:17px;height:17px;background:linear-gradient(#e9eff8 0,#dde6f3 48%,#c9d6ea 52%,#d6e0ef 100%);border-bottom:1px solid #7fa6d4;"></div>
<div style="left:582px;top:611px;width:586px;height:1px;background:#b7cde9;"></div>
<div style="left:582px;top:612px;width:586px;height:17px;background:#f1f5fc;"></div>
<div style="left:564px;top:612px;width:17px;height:17px;background:linear-gradient(#e9eff8 0,#dde6f3 48%,#c9d6ea 52%,#d6e0ef 100%);border-bottom:1px solid #7fa6d4;"></div>
<div style="left:582px;top:628px;width:586px;height:1px;background:#b7cde9;"></div>
<div style="left:582px;top:629px;width:586px;height:17px;background:#fff;"></div>
<div style="left:564px;top:629px;width:17px;height:17px;background:linear-gradient(#e9eff8 0,#dde6f3 48%,#c9d6ea 52%,#d6e0ef 100%);border-bottom:1px solid #7fa6d4;"></div>
<div style="left:582px;top:645px;width:586px;height:1px;background:#b7cde9;"></div>
<div style="left:582px;top:646px;width:586px;height:12px;background:#f1f5fc;"></div>
<div style="left:564px;top:646px;width:17px;height:12px;background:linear-gradient(#e9eff8 0,#dde6f3 48%,#c9d6ea 52%,#d6e0ef 100%);"></div>
<div style="left:621px;top:477px;width:1px;height:13px;background:#7fa6d4;"></div>
<div style="left:621px;top:493px;width:1px;height:165px;background:#b7cde9;"></div>
<div style="left:651px;top:477px;width:1px;height:13px;background:#7fa6d4;"></div>
<div style="left:651px;top:493px;width:1px;height:165px;background:#b7cde9;"></div>
<div style="left:1092px;top:477px;width:1px;height:13px;background:#7fa6d4;"></div>
<div style="left:1092px;top:493px;width:1px;height:165px;background:#b7cde9;"></div>
<span class="t n" style="right:591px;top:478px;letter-spacing:-0.42px;color:#8a1010;">Area</span>
<span class="t n" style="right:561px;top:478px;letter-spacing:-1.11px;color:#8a1010;">Nr</span>
<span class="t n" style="left:657px;top:478px;letter-spacing:-0.2px;color:#8a1010;">Descripción del Area</span>
<span class="t n" style="right:44px;top:480px;letter-spacing:-0.47px;color:#8a1010;">Imp.Cuota</span>
<svg style="left:569px;top:496px" width="6" height="10" viewBox="0 0 6 10"><path d="M0 0L5.5 5L0 10z" fill="#5b8bcb"/></svg>
<span class="t n" style="right:590px;top:495px;">5</span>
<span class="t n" style="right:561px;top:495px;">1</span>
<span class="t n" style="left:656px;top:495px;letter-spacing:-0.35px;">VARIOS</span>
<span class="t n" style="right:44px;top:496px;">0,00</span>
<span class="t n" style="right:590px;top:512px;">40</span>
<span class="t n" style="right:561px;top:512px;">1</span>
<span class="t n" style="left:656px;top:512px;letter-spacing:-0.18px;">HONORARIOS PRESENTACION CUENTAS.</span>
<span class="t n" style="right:44px;top:513px;">41,00</span>
<span class="t n" style="right:590px;top:529px;">70</span>
<span class="t n" style="right:561px;top:529px;">1</span>
<span class="t n" style="left:656px;top:529px;letter-spacing:-0.2px;">SUPLIDOS PRESENTACION CUENTAS</span>
<span class="t n" style="right:44px;top:530px;">41,90</span>
<span class="t n" style="right:590px;top:546px;">80</span>
<span class="t n" style="right:561px;top:546px;">1</span>
<span class="t n" style="left:656px;top:546px;letter-spacing:-0.26px;">SUPLIDOS PRESENTACION LIBROS OFICIALES</span>
<span class="t n" style="right:44px;top:547px;">17,00</span>
<span class="t n" style="right:590px;top:563px;">82</span>
<span class="t n" style="right:561px;top:563px;">1</span>
<span class="t n" style="left:656px;top:563px;letter-spacing:-0.19px;">SUPLIDOS PRESENTACION CTAS ANUALES</span>
<span class="t n" style="right:44px;top:564px;">35,00</span>
<span class="t n" style="right:590px;top:580px;">90</span>
<span class="t n" style="right:561px;top:580px;">1</span>
<span class="t n" style="left:656px;top:580px;letter-spacing:-0.21px;">SUPLIDOS REGISTRO MERCANTIL</span>
<span class="t n" style="right:44px;top:581px;">0,00</span>
<span class="t n" style="right:590px;top:597px;">91</span>
<span class="t n" style="right:561px;top:597px;">1</span>
<span class="t n" style="left:656px;top:597px;letter-spacing:-0.21px;">SUPLIDOS REGISTRO MERCANTIL</span>
<span class="t n" style="right:44px;top:598px;">0,00</span>
<div style="left:1168px;top:474px;width:17px;height:206px;background:linear-gradient(90deg,#fdfdfd,#f3f3f3 60%,#e9e9e9);border-left:1px solid #e3e7ee;"></div>
<svg style="left:1172px;top:480px" width="10" height="5" viewBox="0 0 10 5"><path d="M0 5L5 0L10 5z" fill="#8fa6c6"/></svg>
<svg style="left:1172px;top:668px" width="10" height="5" viewBox="0 0 10 5"><path d="M0 0L5 5L10 0z" fill="#9aa9c0"/></svg>
<div style="left:564px;top:658px;width:604px;height:4px;background:linear-gradient(#eef2f8,#c8d4e6);"></div>
<div style="left:564px;top:662px;width:604px;height:18px;background:#4f6fa6;"></div>
<div style="left:564px;top:662px;width:18px;height:18px;background:linear-gradient(#e9eff8 0,#dde6f3 48%,#c9d6ea 52%,#d6e0ef 100%);border-right:1px solid #7fa6d4;border-top:1px solid #7fa6d4;"></div>
<span class="t n" style="left:567px;top:666px;color:#4a78c4;font-size:13px;transform:scaleX(1.25);transform-origin:0 0;">Σ</span>
<div style="left:582px;top:662px;width:38px;height:17px;background:linear-gradient(#74b0f4 0,#5b9aec 45%,#4a84e0 55%,#5f97ea 100%);border-left:1px solid #0e2248;border-top:2px solid #1a3566;"></div>
<div style="left:622px;top:662px;width:28px;height:17px;background:linear-gradient(#74b0f4 0,#5b9aec 45%,#4a84e0 55%,#5f97ea 100%);border-left:1px solid #0e2248;border-top:2px solid #1a3566;"></div>
<div style="left:652px;top:662px;width:439px;height:17px;background:linear-gradient(#74b0f4 0,#5b9aec 45%,#4a84e0 55%,#5f97ea 100%);border-left:1px solid #0e2248;border-top:2px solid #1a3566;"></div>
<div style="left:1093px;top:662px;width:73px;height:17px;background:linear-gradient(#74b0f4 0,#5b9aec 45%,#4a84e0 55%,#5f97ea 100%);border-left:1px solid #0e2248;border-top:2px solid #1a3566;"></div>
<div style="left:582px;top:679px;width:586px;height:1px;background:#8fb6ee;"></div>
<span class="t b12" style="right:44px;top:664px;letter-spacing:0.16px;color:#000;">134,90</span>
<div style="left:564px;top:680px;width:621px;height:17px;background:linear-gradient(#e9f2fd 0,#e1ecfb 48%,#d2e2f8 52%,#d6e5fa 100%);border-top:1px solid #f4f8fe;"></div>
<span class="t n" style="left:569px;top:684px;letter-spacing:0.0px;color:#1e3e8a;">Registro:</span>
<svg style="left:625px;top:685px" width="9" height="8" viewBox="0 0 9 8"><path d="M0 0h2v8h-2zM8.5 0v8L3 4z" fill="#1e3e8a"/></svg>
<svg style="left:646px;top:685px" width="6" height="8" viewBox="0 0 6 8"><path d="M5.5 0v8L0 4z" fill="#a0a0a0"/></svg>
<div style="left:660px;top:682px;width:43px;height:14px;background:#fff;border:1px solid #6a9bd8;"></div>
<span class="t n" style="right:505px;top:684px;">1</span>
<span class="t n" style="left:706px;top:684px;color:#1e3e8a;">de</span>
<span class="t n" style="left:730px;top:684px;color:#1e3e8a;">7</span>
<svg style="left:750px;top:685px" width="6" height="8" viewBox="0 0 6 8"><path d="M0 0v8L5.5 4z" fill="#1e3e8a"/></svg>
<svg style="left:768px;top:685px" width="9" height="8" viewBox="0 0 9 8"><path d="M7 0h2v8h-2zM.5 0v8L6 4z" fill="#1e3e8a"/></svg>
</div></body></html>
